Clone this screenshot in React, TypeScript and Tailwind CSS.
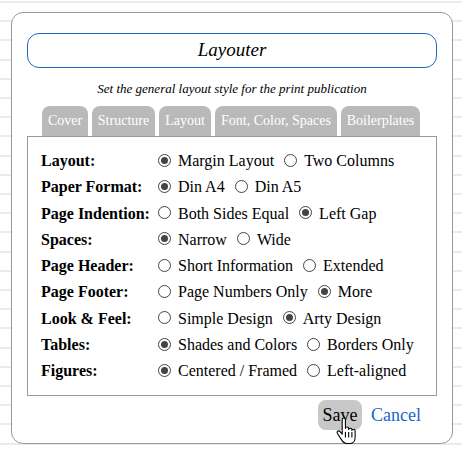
const tabs = [
  { label: "Cover", width: "w-[46px]" },
  { label: "Structure", width: "w-[63px]" },
  { label: "Layout", width: "w-[52px]" },
  { label: "Font, Color, Spaces", width: "w-[122px]" },
  { label: "Boilerplates", width: "w-[79px]" },
];

const rows = [
  { label: "Layout:", options: ["Margin Layout", "Two Columns"], selected: 0 },
  { label: "Paper Format:", options: ["Din A4", "Din A5"], selected: 0 },
  { label: "Page Indention:", options: ["Both Sides Equal", "Left Gap"], selected: 1 },
  { label: "Spaces:", options: ["Narrow", "Wide"], selected: 0 },
  { label: "Page Header:", options: ["Short Information", "Extended"], selected: -1 },
  { label: "Page Footer:", options: ["Page Numbers Only", "More"], selected: 1 },
  { label: "Look & Feel:", options: ["Simple Design", "Arty Design"], selected: 1 },
  { label: "Tables:", options: ["Shades and Colors", "Borders Only"], selected: 0 },
  { label: "Figures:", options: ["Centered / Framed", "Left-aligned"], selected: 0 },
];

function Radio({ checked }: { checked: boolean }) {
  return (
    <span className="-mt-[2px] flex h-[13px] w-[13px] shrink-0 items-center justify-center rounded-full border border-[#444] bg-white">
      {checked && <span className="h-[7px] w-[7px] rounded-full bg-[#444]" />}
    </span>
  );
}

function HandCursor() {
  return (
    <svg
      className="absolute left-[18px] top-[17px]"
      width="21"
      height="27"
      viewBox="0 0 19 25"
      fill="#fff"
      stroke="#000"
      strokeWidth="1"
      strokeLinejoin="round"
    >
      <path d="M5.5 2.5c0-2 3-2 3 0v8c0-1.600 3-1.600 3 0v1c0-1.500 3-1.500 3 0v1c0-1.500 3-1.500 3 0v6c0 3-1.500 6-4.500 6h-3.500c-2.500 0-3.500-1.500-5-4l-3.500-5.500c-1-2 1.500-3 3-1l1.500 2z" />
      <path d="M8.500 14v5M11.500 14v5M14.500 14v5" fill="none" />
    </svg>
  );
}

export default function App() {
  return (
    <div className="h-[453px] w-[462px] overflow-hidden bg-white bg-[repeating-linear-gradient(to_bottom,#ffffff_0px,#ffffff_1px,#ebebeb_1px,#ebebeb_3px,#ffffff_3px,#ffffff_19.2px)] pl-[11px] pt-[12px] font-['Liberation_Serif',serif] text-black">
      <div className="h-[432px] w-[442px] rounded-[12px] border border-[#999] bg-white px-[15px] pt-[20px]">
        <div className="flex h-[35px] w-[410px] items-center justify-center rounded-[12px] border border-[#1a66c0] text-[19px] italic">
          Layouter
        </div>
        <p className="mt-[13px] w-[410px] text-center text-[13px] italic leading-[16px]">
          Set the general layout style for the print publication
        </p>
        <div className="mt-[9px] flex gap-[4px] pl-[15px]">
          {tabs.map((tab) => (
            <div
              key={tab.label}
              className={`flex h-[30px] items-center justify-center whitespace-nowrap rounded-t-[8px] bg-[#b9b9b9] pb-[2px] text-[14px] text-white ${tab.width}`}
            >
              {tab.label}
            </div>
          ))}
        </div>
        <div className="flex h-[260px] w-[410px] flex-col gap-[6.300px] border border-[#999] px-[13px] pt-[14px]">
          {rows.map((row) => (
            <div key={row.label} className="flex h-[20px] items-center text-[16px] leading-[20px]">
              <div className="w-[117px] shrink-0 whitespace-nowrap font-bold">{row.label}</div>
              <div className="flex items-center gap-[10px]">
                {row.options.map((option, index) => (
                  <label key={option} className="flex items-center gap-[7px]">
                    <Radio checked={index === row.selected} />
                    <span>{option}</span>
                  </label>
                ))}
              </div>
            </div>
          ))}
        </div>
        <div className="mt-[4px] flex items-center justify-end gap-[9px] pr-[15px]">
          <div className="relative flex h-[30px] w-[44px] items-center justify-center rounded-[8px] bg-[#c8c8c8] text-[18px]">
            Save
            <HandCursor />
          </div>
          <a className="w-[51px] text-[18px] text-[#1a66cc]">Cancel</a>
        </div>
      </div>
    </div>
  );
}
